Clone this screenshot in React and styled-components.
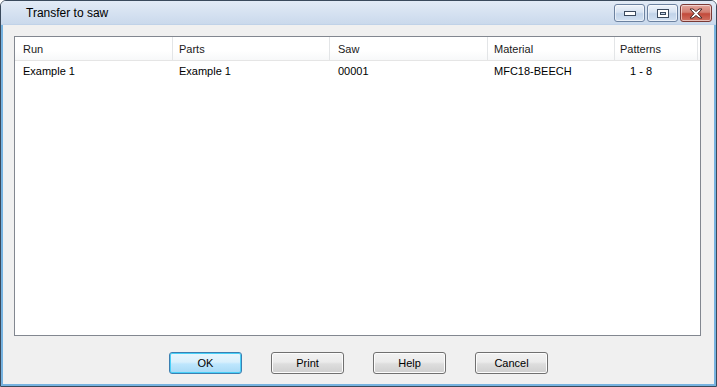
import React from "react";
import styled, { createGlobalStyle } from "styled-components";

const Global = createGlobalStyle`
  html, body { margin: 0; padding: 0; background: #ffffff; }
  * { box-sizing: border-box; }
`;

const Window = styled.div`
  width: 717px;
  height: 387px;
  display: flex;
  flex-direction: column;
  border: 1px solid #3a4a5c;
  border-radius: 6px 6px 0 0;
  overflow: hidden;
  font-family: "Liberation Sans", Arial, sans-serif;
  font-size: 11px;
  color: #000;
`;

const TitleBar = styled.div`
  height: 24px;
  flex: none;
  display: flex;
  align-items: center;
  padding: 0 4px 0 25px;
  background: linear-gradient(#e2ebf6, #cad9ec);
  border-bottom: 1px solid #c0d2e8;
`;

const Title = styled.div`
  flex: 1;
  font-size: 12px;
  color: #000;
  padding-top: 1px;
`;

const Caps = styled.div`
  display: flex;
  gap: 2px;
  align-self: flex-start;
  margin-top: 3px;
`;

const CapButton = styled.div`
  width: ${(p) => (p.$close ? 32 : 31)}px;
  height: 18px;
  border-radius: 3px;
  border: 1px solid ${(p) => (p.$close ? "#7a3a36" : "#6c82a0")};
  background: ${(p) =>
    p.$close
      ? "linear-gradient(#e3a69c, #d37f72 45%, #c24a3b 55%, #d07262)"
      : "linear-gradient(#eef3fa, #d7e3f2 45%, #c1d3e9 55%, #d3e1f2)"};
  box-shadow: inset 0 0 0 1px rgba(255, 255, 255, 0.55);
  display: flex;
  align-items: center;
  justify-content: center;
`;

const Body = styled.div`
  flex: 1;
  display: flex;
  flex-direction: column;
  background: #f0f0f0;
  border-left: 2px solid #77b3e0;
  border-right: 2px solid #77b3e0;
  border-bottom: 2px solid #77b3e0;
  padding: 11px 13px 10px 11px;
`;

const List = styled.div`
  flex: 1;
  background: #ffffff;
  border: 1px solid #828790;
  display: flex;
  flex-direction: column;
`;

const HeaderRow = styled.div`
  display: flex;
  height: 24px;
  border-bottom: 1px solid #e5e5e5;
  background: linear-gradient(#ffffff, #ffffff 60%, #f7f8f9);
`;

const HeaderCell = styled.div`
  width: ${(p) => p.$w}px;
  flex: none;
  display: flex;
  align-items: center;
  padding-left: ${(p) => p.$pad}px;
  border-right: 1px solid #e3e5e7;
  color: #1a1a1a;
`;

const Row = styled.div`
  display: flex;
  height: 19px;
`;

const Cell = styled.div`
  width: ${(p) => p.$w}px;
  flex: none;
  display: flex;
  align-items: center;
  padding-left: ${(p) => p.$pad}px;
`;

const Buttons = styled.div`
  display: flex;
  justify-content: center;
  gap: 29px;
  margin-top: 16px;
  padding-left: 2px;
`;

const Button = styled.button`
  width: 73px;
  height: 22px;
  border-radius: 3px;
  font-family: "Liberation Sans", Arial, sans-serif;
  font-size: 11px;
  color: #000;
  padding: 0;
  border: 1px solid ${(p) => (p.$default ? "#3c7fb1" : "#707070")};
  background: ${(p) =>
    p.$default
      ? "linear-gradient(#eaf6fd, #d9f0fc 45%, #bee6fd 55%, #a7d9f5)"
      : "linear-gradient(#f2f2f2, #ebebeb 45%, #dddddd 55%, #cfcfcf)"};
  box-shadow: inset 0 0 0 1px ${(p) => (p.$default ? "#48d0f8" : "#fcfcfc")};
`;

const cols = [
  { name: "Run", w: 158, pad: 8, val: "Example 1", vpad: 8 },
  { name: "Parts", w: 157, pad: 6, val: "Example 1", vpad: 6 },
  { name: "Saw", w: 158, pad: 8, val: "00001", vpad: 8 },
  { name: "Material", w: 127, pad: 6, val: "MFC18-BEECH", vpad: 6 },
  { name: "Patterns", w: 83, pad: 5, val: "1 - 8", vpad: 15 },
];

const MinIcon = () => (
  <svg width="12" height="5" viewBox="0 0 12 5">
    <rect x="0.5" y="0.5" width="11" height="4" fill="#fff" stroke="#3b4a5e" />
  </svg>
);
const MaxIcon = () => (
  <svg width="12" height="9" viewBox="0 0 12 9">
    <rect x="0.5" y="0.5" width="11" height="8" fill="#fff" stroke="#3b4a5e" />
    <rect x="3.5" y="3.5" width="5" height="2" fill="#c6d6ea" stroke="#3b4a5e" />
  </svg>
);
const CloseIcon = () => (
  <svg width="14" height="11" viewBox="0 0 14 11">
    <path
      d="M1 1 L4 1 L7 3.5 L10 1 L13 1 L8.8 5.5 L13 10 L10 10 L7 7.5 L4 10 L1 10 L5.2 5.5 Z"
      fill="#fff"
      stroke="#4a2a28"
      strokeWidth="1"
      strokeLinejoin="round"
    />
  </svg>
);

export default function App() {
  return (
    <>
      <Global />
      <Window>
        <TitleBar>
          <Title>Transfer to saw</Title>
          <Caps>
            <CapButton><MinIcon /></CapButton>
            <CapButton><MaxIcon /></CapButton>
            <CapButton $close><CloseIcon /></CapButton>
          </Caps>
        </TitleBar>
        <Body>
          <List>
            <HeaderRow>
              {cols.map((c) => (
                <HeaderCell key={c.name} $w={c.w} $pad={c.pad}>
                  {c.name}
                </HeaderCell>
              ))}
            </HeaderRow>
            <Row>
              {cols.map((c) => (
                <Cell key={c.name} $w={c.w} $pad={c.vpad}>
                  {c.val}
                </Cell>
              ))}
            </Row>
          </List>
          <Buttons>
            <Button $default>OK</Button>
            <Button>Print</Button>
            <Button>Help</Button>
            <Button>Cancel</Button>
          </Buttons>
        </Body>
      </Window>
    </>
  );
}
